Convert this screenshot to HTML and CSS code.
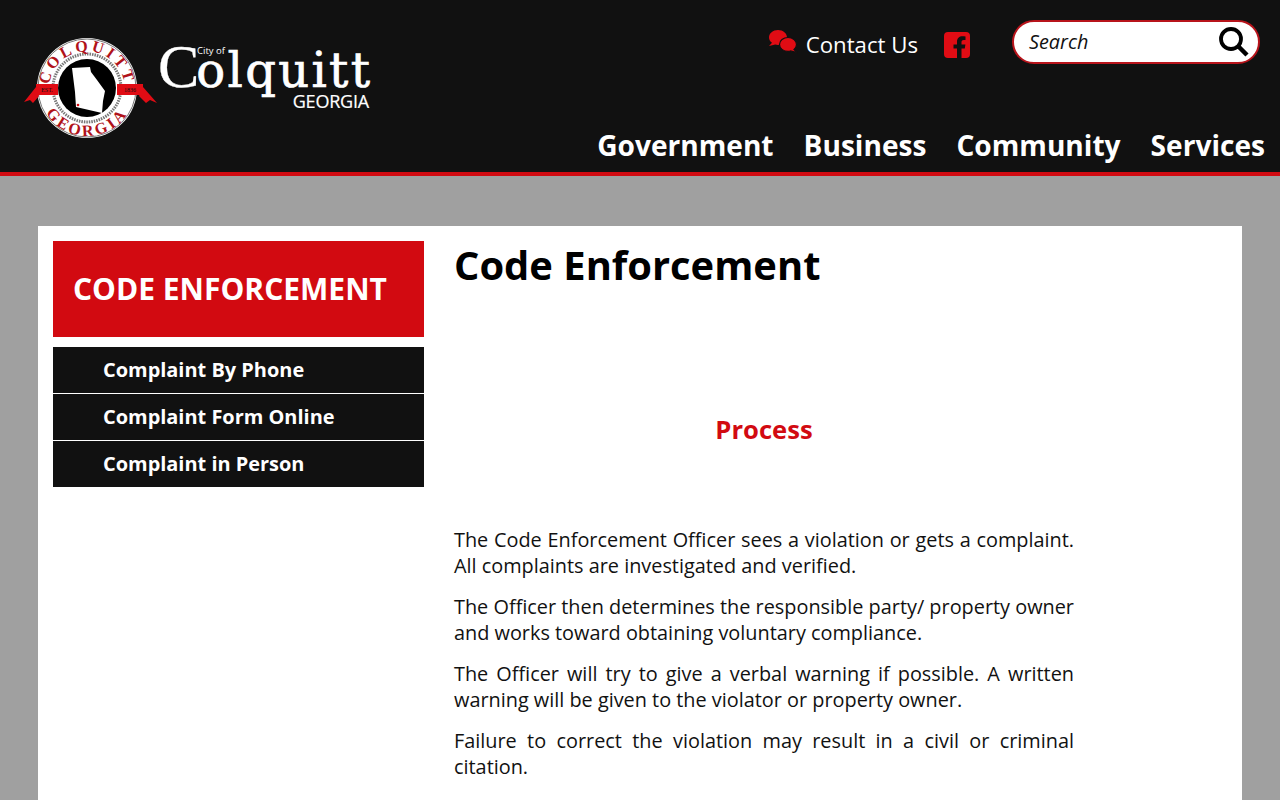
FILE: index.html
```html
<!DOCTYPE html>
<html lang="en">
<head>
<meta charset="utf-8">
<title>Code Enforcement - City of Colquitt, Georgia</title>
<link rel="stylesheet" href="styles.css">
</head>
<body>
<header class="site-header">
  <a class="logo" href="#">
    <svg class="seal" width="136" height="104" viewBox="0 0 136 104">
      <defs>
        <path id="arc-top" d="M28 62 A38 38 0 1 1 102 62"/>
        <path id="arc-bot" d="M17 52 A48 48 0 0 0 113 52"/>
      </defs>
      <circle cx="65" cy="52" r="50" fill="#fff"/>
      <circle cx="65" cy="52" r="49" fill="none" stroke="#777" stroke-width="1"/>
      <circle cx="65" cy="52" r="34" fill="none" stroke="#777" stroke-width="3" stroke-dasharray="1.500 1"/>
      <circle cx="65" cy="52" r="29" fill="#000"/>
      <text class="seal-text" font-size="16" letter-spacing="3"><textPath href="#arc-top" startOffset="50%" text-anchor="middle">COLQUITT</textPath></text>
      <text class="seal-text" font-size="16" letter-spacing="3"><textPath href="#arc-bot" startOffset="50%" text-anchor="middle">GEORGIA</textPath></text>
      <path d="M50 32 L68 31 L69 36 L75 44 L83 55 L81 65 L80 77 L54 71 L53 56 Z" fill="#fff"/>
      <circle cx="56" cy="69" r="1.300" fill="#d20a11"/>
      <path d="M14 51 L2 66 L8 64 L11 67 L17 60 Z M121 51 L135 67 L128 64 L124 67 L117 60 Z" fill="#e00c14"/>
      <rect x="14" y="48" width="22" height="11" fill="#e00c14"/>
      <rect x="95" y="48" width="26" height="11" fill="#e00c14"/>
      <text class="seal-small" x="25" y="56" text-anchor="middle">EST.</text>
      <text class="seal-small" x="108" y="56" text-anchor="middle">1836</text>
    </svg>
    <span class="wordmark">
      <span class="cityof">City of</span>
      <span class="colquitt"><span class="big-c">C</span>olquitt</span>
      <span class="georgia">GEORGIA</span>
    </span>
  </a>
  <div class="header-right">
    <div class="utility">
      <a class="contact" href="#">
        <svg class="chat" width="30" height="24" viewBox="0 0 30 24">
          <path d="M10 0 C15 0 19 3.400 19 7.500 C19 11.600 15 15 10 15 C9 15 8 14.900 7.200 14.600 L1 16 L4 12.800 C2.200 11.500 1 9.600 1 7.500 C1 3.400 5 0 10 0 Z" fill="#e00c14"/>
          <path d="M20 7.500 C24.700 7.500 28.500 10.700 28.500 14.500 C28.500 16.500 27.500 18.200 26 19.500 L29 22.500 L22.500 21 C21.700 21.300 20.900 21.400 20 21.400 C15.300 21.400 11.500 18.300 11.500 14.500 C11.500 10.700 15.300 7.500 20 7.500 Z" fill="#e00c14" stroke="#111" stroke-width="1.200"/>
        </svg>
        <span>Contact Us</span>
      </a>
      <a class="fb" href="#" aria-label="Facebook">
        <svg width="28" height="28" viewBox="0 0 28 28">
          <rect x="1" y="1" width="26" height="26" rx="4" fill="#e00c14"/>
          <path d="M18.500 27 V17.500 H21.800 L22.400 13.500 H18.500 V11.200 C18.500 10 19 9 20.700 9 H22.500 V5.600 C21.500 5.400 20.400 5.300 19.500 5.300 C16.200 5.300 14 7.300 14 10.800 V13.500 H10.500 V17.500 H14 V27 Z" fill="#111"/>
        </svg>
      </a>
      <form class="search">
        <span class="search-label">Search</span>
        <svg width="32" height="32" viewBox="0 0 32 32">
          <circle cx="13" cy="13" r="10" fill="none" stroke="#000" stroke-width="3.800"/>
          <path d="M20.500 20.500 L29 29" stroke="#000" stroke-width="4.500"/>
        </svg>
      </form>
    </div>
    <nav class="main-nav">
      <a href="#">Government</a>
      <a href="#">Business</a>
      <a href="#">Community</a>
      <a href="#">Services</a>
    </nav>
  </div>
</header>
<main class="card">
  <aside class="sidebar">
    <div class="side-title">CODE ENFORCEMENT</div>
    <ul class="side-menu">
      <li><a href="#">Complaint By Phone</a></li>
      <li><a href="#">Complaint Form Online</a></li>
      <li><a href="#">Complaint in Person</a></li>
    </ul>
  </aside>
  <article class="content">
    <h1>Code Enforcement</h1>
    <h2>Process</h2>
    <p>The Code Enforcement Officer sees a violation or gets a complaint. All complaints are investigated and verified.</p>
    <p>The Officer then determines the responsible party/ property owner and works toward obtaining voluntary compliance.</p>
    <p>The Officer will try to give a verbal warning if possible. A written warning will be given to the violator or property owner.</p>
    <p>Failure to correct the violation may result in a civil or criminal citation.</p>
  </article>
</main>
</body>
</html>
```
FILE: styles.css
```css
* { box-sizing: border-box; }
html, body { margin: 0; padding: 0; }
body {
  background: #a0a0a0;
  font-family: "Open Sans", sans-serif;
  color: #111;
}
a { color: inherit; text-decoration: none; }

.site-header {
  height: 176px;
  background: #111;
  border-bottom: 4px solid #d20a11;
  display: flex;
  justify-content: space-between;
  color: #fff;
}
.logo {
  display: flex;
  align-items: flex-start;
  padding: 36px 0 0 22px;
}
.seal-text { font-family: "Liberation Serif", serif; font-weight: 700; fill: #b0121a; }
.seal-small { font-family: "Liberation Serif", serif; font-size: 6px; fill: #111; }
.wordmark {
  position: relative;
  display: block;
  width: 220px;
  height: 72px;
  margin-left: 1px;
}
.colquitt {
  position: absolute;
  left: -1px;
  top: 0;
  font-family: "DejaVu Serif", serif;
  font-size: 48px;
  line-height: 60px;
  letter-spacing: 2.300px;
  white-space: nowrap;
  -webkit-text-stroke: 0.7px #fff;
}
.big-c {
  font-family: "Liberation Serif", serif;
  font-size: 62px;
  letter-spacing: -3px;
  -webkit-text-stroke: 0.3px #fff;
}
.cityof {
  position: absolute;
  left: 38px;
  top: 9px;
  font-size: 9.500px;
  line-height: 12px;
}
.georgia {
  position: absolute;
  right: 10px;
  top: 55px;
  font-size: 18px;
  line-height: 20px;
  letter-spacing: -0.2px;
  -webkit-text-stroke: 0.2px #fff;
}

.header-right {
  display: flex;
  flex-direction: column;
  align-items: flex-end;
}
.utility {
  display: flex;
  align-items: center;
  height: 84px;
  padding-right: 20px;
}
.contact {
  display: flex;
  align-items: center;
  gap: 8px;
  margin-top: 4px;
  font-size: 22.2px;
}
.chat { margin-top: -4px; }
.fb { display: flex; margin: 6px 0 0 25px; }
.search {
  display: flex;
  align-items: center;
  justify-content: space-between;
  width: 248px;
  height: 44px;
  margin-left: 41px;
  padding: 0 8px 0 15px;
  background: #fff;
  border: 2.5px solid #b8141b;
  border-radius: 22px;
  color: #111;
}
.search-label { font-size: 19.84px; font-style: italic; margin-top: -1px; }
.main-nav {
  display: flex;
  gap: 30px;
  padding-right: 15px;
  font-size: 28.100px;
  font-weight: 700;
  line-height: 42px;
  margin-top: 40px;
}

.card {
  display: flex;
  align-items: flex-start;
  margin: 50px 38px 0;
  padding: 15px;
  background: #fff;
}
.sidebar { flex: 0 0 371px; }
.side-title {
  display: flex;
  align-items: center;
  height: 96px;
  padding: 0 0 1px 20px;
  background: #d20a11;
  color: #fff;
  font-size: 30px;
  font-weight: 700;
}
.side-menu { list-style: none; margin: 10px 0 0; padding: 0; }
.side-menu li { border-top: 1px solid #fff; }
.side-menu li:first-child { border-top: 0; }
.side-menu a {
  display: block;
  height: 46px;
  padding-left: 50px;
  background: #111;
  color: #fff;
  font-size: 19.950px;
  font-weight: 700;
  line-height: 46px;
}
.content { width: 620px; margin-left: 30px; }
h1 {
  margin: -1px 0 1px;
  font-size: 39.900px;
  font-weight: 700;
  line-height: 50px;
  color: #000;
}
h2 {
  margin: 0;
  padding: 121px 0 79px;
  text-align: center;
  font-size: 25.600px;
  font-weight: 700;
  line-height: 36px;
  color: #d20a11;
}
p {
  margin: 0 0 15px;
  font-size: 19.870px;
  line-height: 26px;
  text-align: justify;
}
```
